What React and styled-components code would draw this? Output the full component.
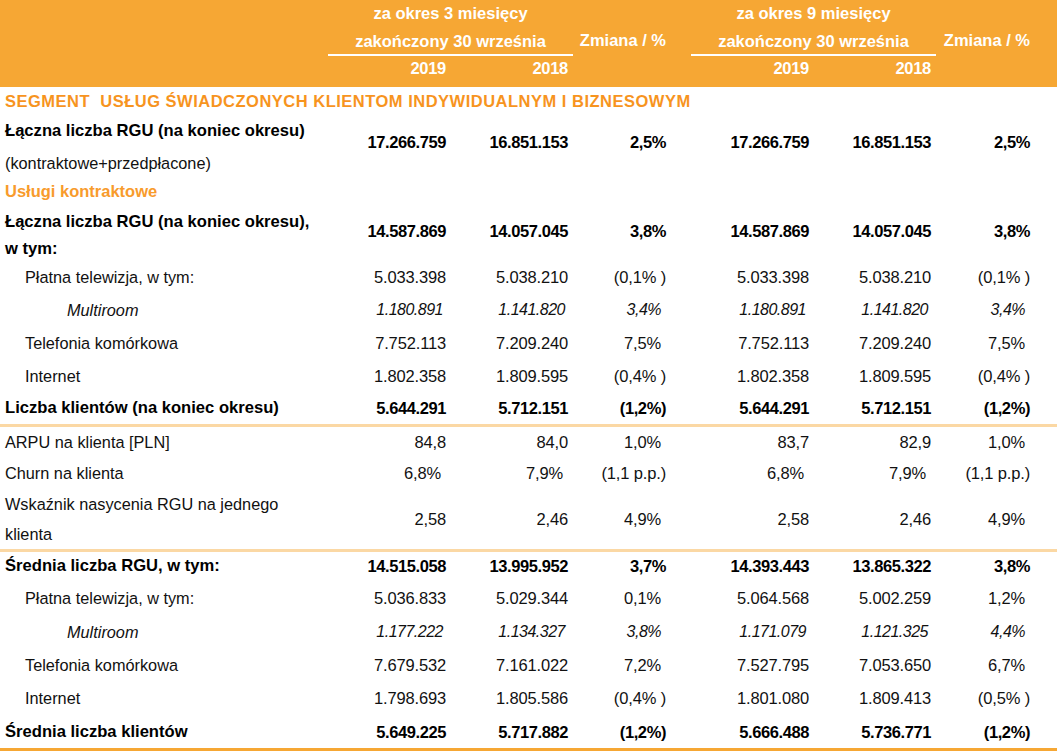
import React from 'react';
import styled, { createGlobalStyle, css } from 'styled-components';

const GlobalStyle = createGlobalStyle`
  html, body { margin: 0; padding: 0; background: #ffffff; }
  body { font-family: "Liberation Sans", Arial, sans-serif; color: #000; }
  *, *::before, *::after { box-sizing: border-box; }
`;

const COLS = '340px 106px 122px 98px 143px 122px 99px 27px';
const ORANGE = '#f6a734';
const TITLE = '#f7941e';
const SUB = '#f89b2c';
const LIGHT = '#fbd8a4';

const Page = styled.div`
  width: 1057px;
`;

const Header = styled.header`
  display: grid;
  grid-template-columns: 328px 245px 118px 245px 121px;
  height: 87px;
  background: ${ORANGE};
  color: #fff;
  font-weight: 700;
  font-size: 16.5px;
`;

const Group = styled.div`
  grid-column: ${(p) => p.$col};
  display: flex;
  flex-direction: column;
`;

const GroupLine = styled.div`
  text-align: center;
  white-space: nowrap;
  line-height: ${(p) => p.$lh}px;
  padding-top: ${(p) => p.$pt || 0}px;
`;

const Rule = styled.div`
  height: 2px;
  background: #ffffff;
`;

const Years = styled.div`
  display: grid;
  grid-template-columns: 118px 127px;
  line-height: 25px;
`;

const Year = styled.div`
  text-align: right;
  padding-right: ${(p) => p.$pad}px;
  letter-spacing: -0.3px;
`;

const ChangeHead = styled.div`
  grid-column: ${(p) => p.$col};
  text-align: right;
  white-space: nowrap;
  padding-right: ${(p) => p.$pad}px;
  padding-top: 27px;
  line-height: 26px;
`;

const SectionTitle = styled.div`
  height: ${(p) => p.$h}px;
  display: flex;
  align-items: center;
  padding-left: 5px;
  color: ${(p) => p.$color};
  font-weight: 700;
  font-size: 16.5px;
  letter-spacing: ${(p) => p.$ls || 0}px;
  white-space: pre;
`;

const Value = styled.div`
  text-align: right;
  white-space: pre;
  line-height: 20px;
  padding-right: ${(p) => p.$pad}px;
  font-size: ${(p) => (p.$kind === 'italic' ? 16 : 16.5)}px;
  font-weight: ${(p) => (p.$kind === 'bold' ? 700 : 400)};
  font-style: ${(p) => (p.$kind === 'italic' ? 'italic' : 'normal')};
  letter-spacing: ${(p) => (p.$kind === 'bold' ? -0.4 : p.$kind === 'italic' ? -0.5 : -0.15)}px;
  color: ${(p) => (p.$kind === 'bold' ? '#000' : '#111')};
`;

const Label = styled.div`
  white-space: nowrap;
  padding-left: ${(p) => p.$indent}px;
  padding-top: ${(p) => p.$pt || 0}px;
  align-self: ${(p) => (p.$pt != null ? 'start' : 'center')};
  line-height: ${(p) => p.$lh || 20}px;
  font-size: ${(p) => (p.$kind === 'bold' ? 16.6 : 16.3)}px;
  font-weight: ${(p) => (p.$kind === 'bold' ? 700 : 400)};
  font-style: ${(p) => (p.$kind === 'italic' ? 'italic' : 'normal')};
  color: ${(p) => (p.$kind === 'bold' ? '#000' : '#111')};
`;

const Note = styled.span`
  font-weight: 400;
  font-size: 16.3px;
  color: #111;
`;

const Row = styled.div`
  display: grid;
  grid-template-columns: ${COLS};
  height: ${(p) => p.$h}px;
  align-items: center;
  border-bottom: ${(p) => (p.$rule ? `3px solid ${p.$rule}` : 'none')};
  ${(p) =>
    p.$vTop != null &&
    css`
      & > ${Value} {
        align-self: start;
        padding-top: ${p.$vTop}px;
      }
    `}
`;

const padFor = (v, kind) => {
  if (kind === 'bold') return 0;
  if (v.endsWith('%')) return 5;
  if (kind === 'italic') return 3;
  return 0;
};

const INDENT = { 0: 5, 1: 25, 2: 67 };

const rowsTop = [
  {
    h: 62, kind: 'bold', lh: 32, pt: 0, vTop: 17,
    label: (<>Łączna liczba RGU (na koniec okresu)<br /><Note>(kontraktowe+przedpłacone)</Note></>),
    values: ['17.266.759', '16.851.153', '2,5%', '17.266.759', '16.851.153', '2,5%'],
  },
];

const rowsContract = [
  {
    h: 55, kind: 'bold', lh: 27, pt: 3, vTop: 16,
    label: (<>Łączna liczba RGU (na koniec okresu),<br />w tym:</>),
    values: ['14.587.869', '14.057.045', '3,8%', '14.587.869', '14.057.045', '3,8%'],
  },
  { h: 33, kind: 'regular', indent: 1, label: 'Płatna telewizja, w tym:', values: ['5.033.398', '5.038.210', '(0,1% )', '5.033.398', '5.038.210', '(0,1% )'] },
  { h: 33, kind: 'italic', indent: 2, label: 'Multiroom', values: ['1.180.891', '1.141.820', '3,4%', '1.180.891', '1.141.820', '3,4%'] },
  { h: 33, kind: 'regular', indent: 1, label: 'Telefonia komórkowa', values: ['7.752.113', '7.209.240', '7,5%', '7.752.113', '7.209.240', '7,5%'] },
  { h: 33, kind: 'regular', indent: 1, label: 'Internet', values: ['1.802.358', '1.809.595', '(0,4% )', '1.802.358', '1.809.595', '(0,4% )'] },
  { h: 35, kind: 'bold', rule: LIGHT, label: 'Liczba klientów (na koniec okresu)', values: ['5.644.291', '5.712.151', '(1,2%)', '5.644.291', '5.712.151', '(1,2%)'] },
  { h: 29, kind: 'regular', label: 'ARPU na klienta [PLN]', values: ['84,8', '84,0', '1,0%', '83,7', '82,9', '1,0%'] },
  { h: 33, kind: 'regular', label: 'Churn na klienta', values: ['6,8%', '7,9%', '(1,1 p.p.)', '6,8%', '7,9%', '(1,1 p.p.)'] },
  {
    h: 63, kind: 'regular', lh: 30, rule: LIGHT,
    label: (<>Wskaźnik nasycenia RGU na jednego<br />klienta</>),
    values: ['2,58', '2,46', '4,9%', '2,58', '2,46', '4,9%'],
  },
  { h: 28, kind: 'bold', label: 'Średnia liczba RGU, w tym:', values: ['14.515.058', '13.995.952', '3,7%', '14.393.443', '13.865.322', '3,8%'] },
  { h: 35, kind: 'regular', indent: 1, label: 'Płatna telewizja, w tym:', values: ['5.036.833', '5.029.344', '0,1%', '5.064.568', '5.002.259', '1,2%'] },
  { h: 33, kind: 'italic', indent: 2, label: 'Multiroom', values: ['1.177.222', '1.134.327', '3,8%', '1.171.079', '1.121.325', '4,4%'] },
  { h: 33, kind: 'regular', indent: 1, label: 'Telefonia komórkowa', values: ['7.679.532', '7.161.022', '7,2%', '7.527.795', '7.053.650', '6,7%'] },
  { h: 34, kind: 'regular', indent: 1, label: 'Internet', values: ['1.798.693', '1.805.586', '(0,4% )', '1.801.080', '1.809.413', '(0,5% )'] },
  { h: 36, kind: 'bold', rule: ORANGE, label: 'Średnia liczba klientów', values: ['5.649.225', '5.717.882', '(1,2%)', '5.666.488', '5.736.771', '(1,2%)'] },
];

function DataRow({ row }) {
  return (
    <Row $h={row.h} $rule={row.rule} $vTop={row.vTop}>
      <Label $kind={row.kind} $indent={INDENT[row.indent || 0]} $lh={row.lh} $pt={row.pt}>
        {row.label}
      </Label>
      {row.values.map((v, i) => (
        <Value key={i} $kind={row.kind} $pad={padFor(v, row.kind)}>
          {v}
        </Value>
      ))}
    </Row>
  );
}

function PeriodGroup({ col, months }) {
  return (
    <Group $col={col}>
      <GroupLine $lh={26}>za okres {months} miesięcy</GroupLine>
      <GroupLine $lh={25} $pt={3}>zakończony 30 września</GroupLine>
      <Rule />
      <Years>
        <Year $pad={0}>2019</Year>
        <Year $pad={5}>2018</Year>
      </Years>
    </Group>
  );
}

export default function App() {
  return (
    <Page>
      <GlobalStyle />
      <Header>
        <PeriodGroup col={2} months={3} />
        <ChangeHead $col={3} $pad={25}>Zmiana / %</ChangeHead>
        <PeriodGroup col={4} months={9} />
        <ChangeHead $col={5} $pad={27}>Zmiana / %</ChangeHead>
      </Header>
      <SectionTitle $h={28} $color={TITLE} $ls={0.5}>
        {'SEGMENT  USŁUG ŚWIADCZONYCH KLIENTOM INDYWIDUALNYM I BIZNESOWYM'}
      </SectionTitle>
      {rowsTop.map((r, i) => (
        <DataRow key={`t${i}`} row={r} />
      ))}
      <SectionTitle $h={28} $color={SUB}>Usługi kontraktowe</SectionTitle>
      {rowsContract.map((r, i) => (
        <DataRow key={`c${i}`} row={r} />
      ))}
    </Page>
  );
}
